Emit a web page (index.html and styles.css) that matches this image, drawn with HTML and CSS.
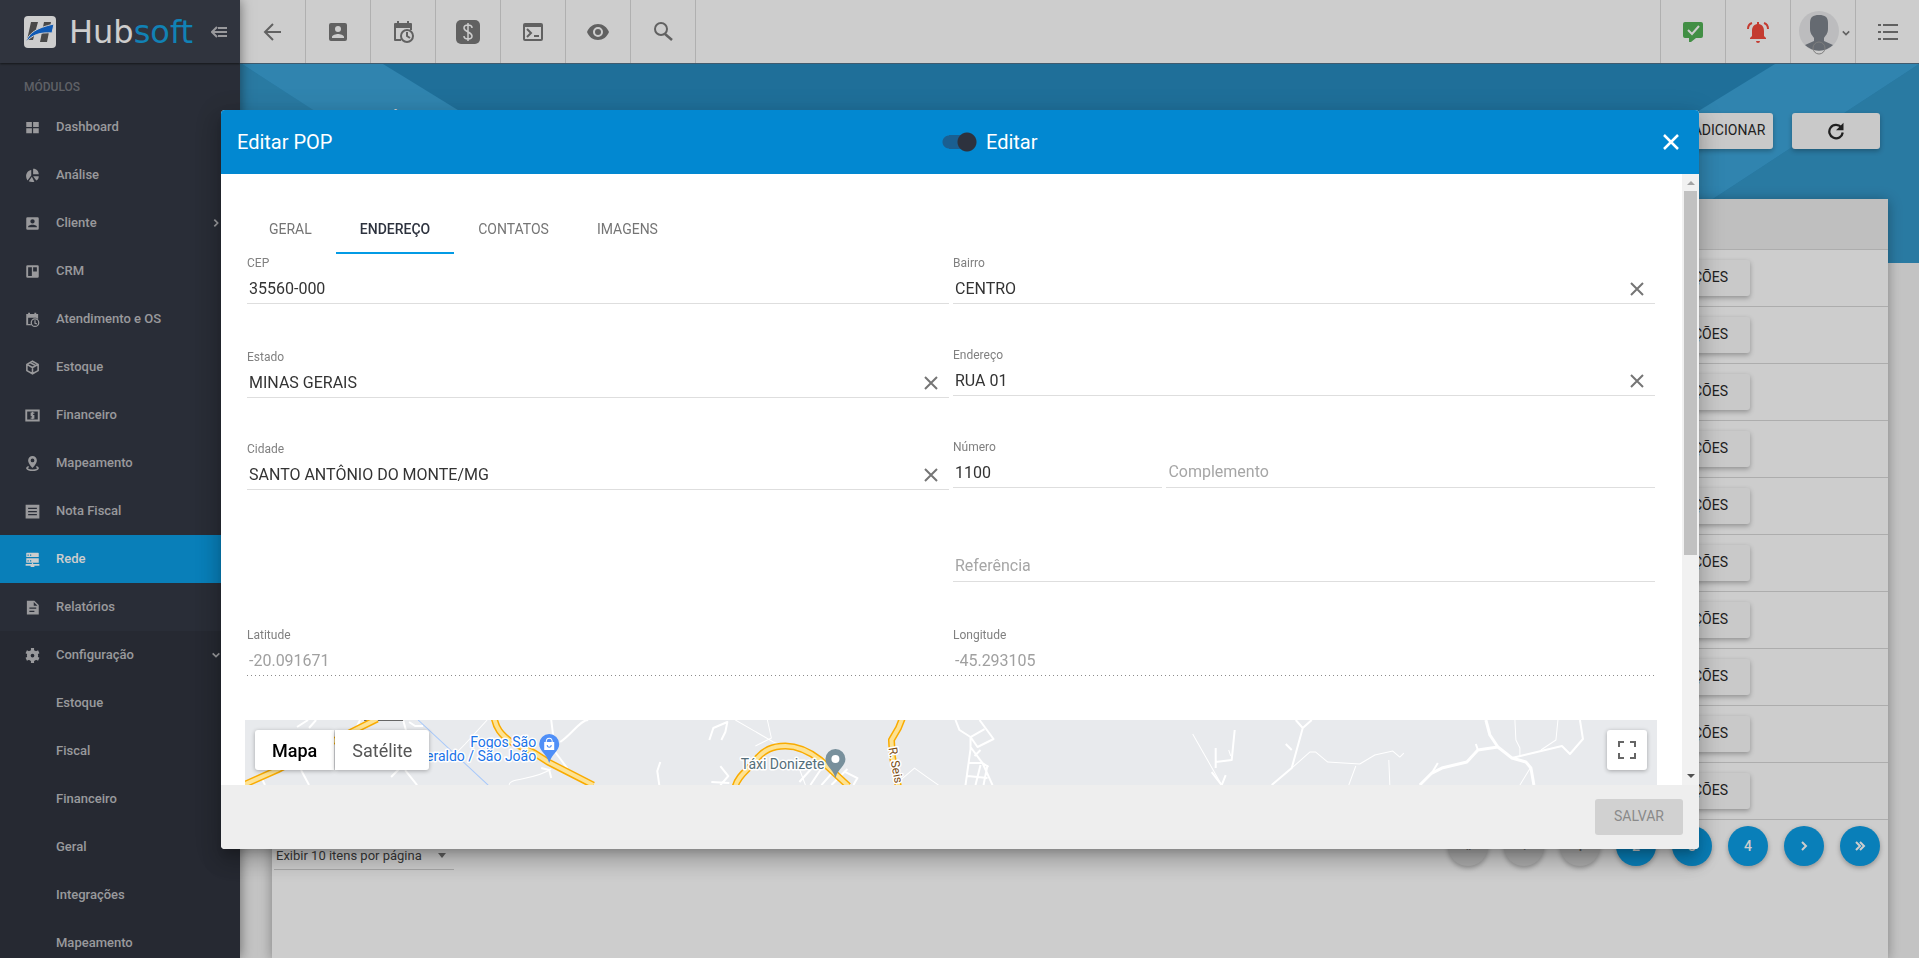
FILE: index.html
```html
<!DOCTYPE html>
<html lang="pt-BR">
<head>
    <meta charset="UTF-8">
    <meta name="viewport" content="width=device-width, initial-scale=1.0">
    <title>Hubsoft - Editar POP</title>
    <link rel="stylesheet" href="styles.css">
</head>
<body>

<div class="app">
    <aside class="sidebar">
        <div class="brand">
            <svg class="brand-mark" viewBox="0 0 32 32">
                <rect width="32" height="32" rx="4" fill="#fff"/>
                <path d="M7 6h7l-5 18H3zM20 6h7l-4 20h-7z" fill="#555"/>
                <path d="M2 26C5 17 12 12 30 8l-2 9c-12-1-20 2-26 9z" fill="#0b6be0" stroke="#fff" stroke-width="1"/>
            </svg>
            <span class="brand-name">Hub<span>soft</span></span>
            <button class="collapse" type="button" aria-label="Recolher menu">
                <svg viewBox="0 0 16 12"><path d="M6 1L1 6l5 5M1 6h15M7 2h9M7 10h9" fill="none" stroke="currentColor" stroke-width="2"/></svg>
            </button>
        </div>
        <h2 class="menu-title">MÓDULOS</h2>
        <nav class="menu">
            <a href="#"><svg viewBox="0 0 24 24"><path d="M2 3h9v8H2zM13 3h9v8h-9zM2 13h9v8H2zM13 13h9v8h-9z"/></svg>Dashboard</a>
            <a href="#"><svg viewBox="0 0 24 24"><path d="M10 3v9L4 20C-1 12 3 4 10 3zM13 1c6 0 9 4 9 9h-9zM13 13h9c0 4-2 6-4 7zM11 14l4 8c-4 1-7 0-9-1z"/></svg>Análise</a>
            <a href="#"><svg viewBox="0 0 24 24"><path fill-rule="evenodd" d="M4 2h16a2 2 0 0 1 2 2v16a2 2 0 0 1-2 2H4a2 2 0 0 1-2-2V4a2 2 0 0 1 2-2zm8 3a3.500 3.500 0 1 0 0 7 3.500 3.500 0 0 0 0-7zM5 18h14v-1c0-2-5-3-7-3s-7 1-7 3z"/></svg>Cliente<svg class="arrow" viewBox="0 0 24 24"><path d="M8 4l8 8-8 8" fill="none" stroke="currentColor" stroke-width="4"/></svg></a>
            <a href="#"><svg viewBox="0 0 24 24"><path fill-rule="evenodd" d="M4 2h16a2 2 0 0 1 2 2v16a2 2 0 0 1-2 2H4a2 2 0 0 1-2-2V4a2 2 0 0 1 2-2zm1 3v14h6V5zm8 0v7h6V5z"/></svg>CRM</a>
            <a href="#"><svg viewBox="0 0 24 24"><path fill-rule="evenodd" d="M2 3h3V1h3v2h7V1h3v2h3v8a8 8 0 0 0-3-1V9H5v10h4l1 2H2z"/><circle cx="16" cy="17" r="6" fill="none" stroke="currentColor" stroke-width="2"/><path d="M16 13v5l3 1" fill="none" stroke="currentColor" stroke-width="2"/></svg>Atendimento e OS</a>
            <a href="#"><svg viewBox="0 0 24 24"><path d="M12 2l9 5v10l-9 5-9-5V7zM3 7l9 5 9-5M12 12v10M8 4l9 5" fill="none" stroke="currentColor" stroke-width="2.500"/></svg>Estoque</a>
            <a href="#"><svg viewBox="0 0 24 24"><path d="M2 4h20v16H2z" fill="none" stroke="currentColor" stroke-width="3"/><path d="M15 8h-5v4h4v4H9M12 6v12" fill="none" stroke="currentColor" stroke-width="2"/></svg>Financeiro</a>
            <a href="#"><svg viewBox="0 0 24 24"><path fill-rule="evenodd" d="M12 0a7 7 0 0 1 7 7c0 5-7 12-7 12S5 12 5 7a7 7 0 0 1 7-7zm0 4a3 3 0 1 0 0 6 3 3 0 0 0 0-6z"/><path d="M6 17c-7 3 0 6 6 6s13-3 6-6" fill="none" stroke="currentColor" stroke-width="2.500"/></svg>Mapeamento</a>
            <a href="#"><svg viewBox="0 0 24 24"><path fill-rule="evenodd" d="M1 1h22v22H1zM5 6v2h14V6zm0 5v2h14v-2zm0 5v2h14v-2z"/></svg>Nota Fiscal</a>
            <a href="#" class="active"><svg viewBox="0 0 24 24"><path fill-rule="evenodd" d="M3 1h18a1 1 0 0 1 1 1v6H2V2a1 1 0 0 1 1-1zM2 10h20v7H2zM4 4v2h2V4zm4 0v2h2V4zM4 13v2h2v-2zm4 0v2h2v-2z"/><path d="M11 17h2v2h10v3h-8v2H9v-2H1v-3h10z"/></svg>Rede</a>
            <a href="#"><svg viewBox="0 0 24 24"><path fill-rule="evenodd" d="M3 1h12l7 7v15H3zM14 3v6h6zM7 12v2h11v-2zm0 5v2h8v-2z"/></svg>Relatórios</a>
        </nav>
        <nav class="menu submenu">
            <a href="#"><svg viewBox="0 0 24 24"><circle cx="12" cy="12" r="6" fill="none" stroke="currentColor" stroke-width="6"/><path d="M12 0v5M12 19v5M2 6l4 2M18 16l4 2M2 18l4-2M18 8l4-2" fill="none" stroke="currentColor" stroke-width="5"/></svg>Configuração<svg class="arrow" viewBox="0 0 24 24"><path d="M4 8l8 8 8-8" fill="none" stroke="currentColor" stroke-width="4"/></svg></a>
            <a href="#" class="sub">Estoque</a>
            <a href="#" class="sub">Fiscal</a>
            <a href="#" class="sub">Financeiro</a>
            <a href="#" class="sub">Geral</a>
            <a href="#" class="sub">Integrações</a>
            <a href="#" class="sub">Mapeamento</a>
        </nav>
    </aside>

    <div class="page">
        <header class="topbar">
            <div class="topbar-group">
                <button type="button" aria-label="Voltar"><svg viewBox="0 0 24 24"><path d="M20 12H5M12 4l-8 8 8 8" fill="none" stroke="currentColor" stroke-width="2"/></svg></button>
                <button type="button" aria-label="Clientes"><svg viewBox="0 0 24 24"><path fill-rule="evenodd" d="M5 3h14a2 2 0 0 1 2 2v14a2 2 0 0 1-2 2H5a2 2 0 0 1-2-2V5a2 2 0 0 1 2-2zm7 3a3 3 0 1 0 0 6 3 3 0 0 0 0-6zM6 18h12v-1c0-2-4-3-6-3s-6 1-6 3z"/></svg></button>
                <button type="button" aria-label="Agenda"><svg viewBox="0 0 24 24"><path d="M3 4a1 1 0 0 1 1-1h2V1h2v2h8V1h2v2h2a1 1 0 0 1 1 1v6h-2V8H5v11h5v2H4a1 1 0 0 1-1-1z"/><circle cx="16" cy="16" r="6" fill="none" stroke="currentColor" stroke-width="2"/><path d="M16 12v4l3 2" fill="none" stroke="currentColor" stroke-width="2"/></svg></button>
                <button type="button" aria-label="Financeiro"><svg viewBox="0 0 24 24"><rect width="24" height="24" rx="5"/><path d="M16 8c0-4-8-4-8 0s8 4 8 8-8 4-8 0M12 3v18" fill="none" stroke="#fff" stroke-width="1.500"/></svg></button>
                <button type="button" aria-label="Console"><svg viewBox="0 0 24 24"><path fill-rule="evenodd" d="M4 3h16a2 2 0 0 1 2 2v14a2 2 0 0 1-2 2H4a2 2 0 0 1-2-2V5a2 2 0 0 1 2-2zm0 4v12h16V7z"/><path d="M6 9l4 4-4 4M13 16h5" fill="none" stroke="currentColor" stroke-width="2"/></svg></button>
                <button type="button" aria-label="Visualizar"><svg viewBox="0 0 24 24"><path fill-rule="evenodd" d="M12 4c5 0 9 3 11 8-2 5-6 8-11 8s-9-3-11-8c2-5 6-8 11-8zm0 3a5 5 0 1 0 0 10 5 5 0 0 0 0-10z"/><circle cx="12" cy="12" r="3"/></svg></button>
                <button type="button" aria-label="Buscar"><svg viewBox="0 0 24 24"><circle cx="10" cy="9" r="6" fill="none" stroke="currentColor" stroke-width="2"/><path d="M14 14l7 6" fill="none" stroke="currentColor" stroke-width="2.500"/></svg></button>
            </div>
            <div class="topbar-group topbar-right">
                <button type="button" class="ok" aria-label="Mensagens"><svg viewBox="0 0 24 24"><path d="M4 2h16a2 2 0 0 1 2 2v12a2 2 0 0 1-2 2h-5l-5 4h-2v-4H4a2 2 0 0 1-2-2V4a2 2 0 0 1 2-2z"/><path d="M7 10l4 4 7-8" fill="none" stroke="#fff" stroke-width="2"/></svg></button>
                <button type="button" class="alert" aria-label="Notificações"><svg viewBox="0 0 24 24"><path d="M11 2h2v2c4 1 5 4 5 7v5l2 2v1H4v-1l2-2v-5c0-3 1-6 5-7zM10 21h4a2 2 0 0 1-4 0z"/><path d="M6 3C3 4 2 7 2 9M18 3c3 1 4 4 4 6" fill="none" stroke="currentColor" stroke-width="2"/></svg></button>
                <button type="button" class="user" aria-label="Usuário">
                    <svg class="avatar" viewBox="0 0 40 44"><circle cx="20" cy="20" r="20" fill="#e9eaec"/><path d="M20 4c6 0 9 2 9 8v6c0 5-3 7-4 9v3l9 4a20 20 0 0 1-28 0l9-4v-3c-1-2-4-4-4-9v-6c0-6 3-8 9-8z" fill="#7a8089"/><circle cx="20" cy="37" r="6" fill="none" stroke="#999" stroke-width="1"/></svg>
                    <svg class="caret" viewBox="0 0 10 6"><path d="M1 1l4 4 4-4" fill="none" stroke="currentColor" stroke-width="2"/></svg>
                </button>
                <button type="button" aria-label="Atalhos"><svg viewBox="0 0 24 24"><path d="M7 5h15M7 12h15M7 19h15M2 5h3M2 12h3M2 19h3" fill="none" stroke="currentColor" stroke-width="2"/></svg></button>
            </div>
        </header>

        <main class="main">
            <svg class="backdrop" viewBox="0 0 1679 199" preserveAspectRatio="none">
                <path d="M0 0h1679v199H0z" fill="#2087bd"/>
                <path d="M0 0h2l310 199H0z" fill="#2d94c8"/>
                <path d="M2 0h141l324 199H310z" fill="#36a2d9"/>
                <path d="M1679 0v199H1375z" fill="#2d94c8"/>
                <path d="M1535 0h144l-304 199h-164z" fill="#36a2d9"/>
            </svg>
            <div class="page-header">
                <h1>Concentradores</h1>
                <button type="button" class="raised">ADICIONAR</button>
                <button type="button" class="raised refresh" aria-label="Atualizar"><svg viewBox="0 0 24 24"><path d="M19 7a9 9 0 1 0 2 7" fill="none" stroke="currentColor" stroke-width="3"/><path d="M22 1v10H12z"/></svg></button>
            </div>
            <section class="card">
                <table class="list">
                    <thead><tr><th></th><th class="actions"></th></tr></thead>
                    <tbody>
                        <tr><td></td><td class="actions"><button type="button" class="raised">AÇÕES</button></td></tr>
                        <tr><td></td><td class="actions"><button type="button" class="raised">AÇÕES</button></td></tr>
                        <tr><td></td><td class="actions"><button type="button" class="raised">AÇÕES</button></td></tr>
                        <tr><td></td><td class="actions"><button type="button" class="raised">AÇÕES</button></td></tr>
                        <tr><td></td><td class="actions"><button type="button" class="raised">AÇÕES</button></td></tr>
                        <tr><td></td><td class="actions"><button type="button" class="raised">AÇÕES</button></td></tr>
                        <tr><td></td><td class="actions"><button type="button" class="raised">AÇÕES</button></td></tr>
                        <tr><td></td><td class="actions"><button type="button" class="raised">AÇÕES</button></td></tr>
                        <tr><td></td><td class="actions"><button type="button" class="raised">AÇÕES</button></td></tr>
                        <tr><td></td><td class="actions"><button type="button" class="raised">AÇÕES</button></td></tr>
                    </tbody>
                </table>
                <div class="pager">
                    <div class="page-size">
                        <select aria-label="Itens por página"><option>Exibir 10 itens por página</option></select>
                        <svg viewBox="0 0 8 5"><path d="M0 0h8L4 5z"/></svg>
                    </div>
                    <div class="pages">
                        <button type="button" disabled>«</button>
                        <button type="button" disabled>‹</button>
                        <button type="button" disabled>1</button>
                        <button type="button">2</button>
                        <button type="button">3</button>
                        <button type="button">4</button>
                        <button type="button" aria-label="Próxima"><svg viewBox="0 0 12 12"><path d="M4 2l4 4-4 4" fill="none" stroke="currentColor" stroke-width="2"/></svg></button>
                        <button type="button" aria-label="Última"><svg viewBox="0 0 12 12"><path d="M2 2l4 4-4 4M6 2l4 4-4 4" fill="none" stroke="currentColor" stroke-width="2"/></svg></button>
                    </div>
                </div>
            </section>
        </main>
    </div>
</div>

<div class="overlay">
    <div class="modal" role="dialog" aria-labelledby="modalTitle">
        <div class="modal-header">
            <h2 id="modalTitle">Editar POP</h2>
            <label class="switch" for="editar">
                <input type="checkbox" id="editar" checked>
                Editar
            </label>
            <button type="button" class="close" aria-label="Fechar"><svg viewBox="0 0 24 24"><path d="M5 5l14 14M19 5L5 19" fill="none" stroke="currentColor" stroke-width="2.500"/></svg></button>
        </div>

        <div class="modal-body">
            <div class="modal-content">
                <div class="tabs" role="tablist">
                    <button type="button" role="tab">GERAL</button>
                    <button type="button" role="tab" class="active" aria-selected="true">ENDEREÇO</button>
                    <button type="button" role="tab">CONTATOS</button>
                    <button type="button" role="tab">IMAGENS</button>
                </div>

                <form id="enderecoForm">
                    <div class="columns">
                        <div class="column">
                            <div class="field tall">
                                <label for="cep">CEP</label>
                                <div class="control"><input type="text" id="cep" value="35560-000"></div>
                            </div>
                            <div class="field">
                                <label for="estado">Estado</label>
                                <div class="control"><input type="text" id="estado" value="MINAS GERAIS"><button type="button" class="clear" aria-label="Limpar"><svg viewBox="0 0 14 14"><path d="M1 1l12 12M13 1L1 13" fill="none" stroke="currentColor" stroke-width="2"/></svg></button></div>
                            </div>
                            <div class="field">
                                <label for="cidade">Cidade</label>
                                <div class="control"><input type="text" id="cidade" value="SANTO ANTÔNIO DO MONTE/MG"><button type="button" class="clear" aria-label="Limpar"><svg viewBox="0 0 14 14"><path d="M1 1l12 12M13 1L1 13" fill="none" stroke="currentColor" stroke-width="2"/></svg></button></div>
                            </div>
                        </div>
                        <div class="column">
                            <div class="field">
                                <label for="bairro">Bairro</label>
                                <div class="control"><input type="text" id="bairro" value="CENTRO"><button type="button" class="clear" aria-label="Limpar"><svg viewBox="0 0 14 14"><path d="M1 1l12 12M13 1L1 13" fill="none" stroke="currentColor" stroke-width="2"/></svg></button></div>
                            </div>
                            <div class="field">
                                <label for="endereco">Endereço</label>
                                <div class="control"><input type="text" id="endereco" value="RUA 01"><button type="button" class="clear" aria-label="Limpar"><svg viewBox="0 0 14 14"><path d="M1 1l12 12M13 1L1 13" fill="none" stroke="currentColor" stroke-width="2"/></svg></button></div>
                            </div>
                            <div class="split">
                                <div class="field tall">
                                    <label for="numero">Número</label>
                                    <div class="control"><input type="text" id="numero" value="1100"></div>
                                </div>
                                <div class="field tall no-label">
                                    <div class="control"><input type="text" id="complemento" placeholder="Complemento" aria-label="Complemento"></div>
                                </div>
                            </div>
                            <div class="field tall no-label">
                                <div class="control"><input type="text" id="referencia" placeholder="Referência" aria-label="Referência"></div>
                            </div>
                        </div>
                    </div>
                    <div class="columns">
                        <div class="field tall column">
                            <label for="latitude">Latitude</label>
                            <div class="control"><input type="text" id="latitude" value="-20.091671" disabled></div>
                        </div>
                        <div class="field tall column">
                            <label for="longitude">Longitude</label>
                            <div class="control"><input type="text" id="longitude" value="-45.293105" disabled></div>
                        </div>
                    </div>
                </form>

                <div class="map">
                    <svg class="map-canvas" viewBox="0 0 1411 300" preserveAspectRatio="xMidYMin slice">
                        <rect width="1411" height="300" fill="#e8eaed"/>
                        <g class="street">
                            <path d="M63 0l-11 7M64 8l7-8M110 10l5-10M158 0l5 18M164 2l6 4h8M56 50l8 15M16 57l4 8M146 57l12-12M160 50l12 15M306 0l4 32M315 22c12-8 20-22 28-22M310 32l12 16M296 48l8 2 2 8M414 65l-2-14 3-9"/>
                            <path d="M464 20l4-12 14-6-2 10-4 8M475 46l8 10-8 9M466 62l18 1M554 62l18-20M565 65l16-24M576 65l16-18M586 65l16-16M600 52l12 6-4 7"/>
                            <path d="M710 0l4 10 11 7v12l-5 36M734 0l14 19-16 8-7-10 14-8M725 27l12 16 10 22M723 43h14l6 4M730 65l5-20M738 65l4-20M722 56l20 2M729 36l6-6"/>
                            <path d="M989 10l-3 30-16 2M970 28v20M966 52l10 13 4-10M1050 0l7 8-11 40-20 17M1066 0l-9 8M1040 24l6 6"/>
                        </g>
                        <g class="street thin">
                            <path d="M210 34l10-10 22-24M264 65c0-8 24-4 42-16M490 0l38 22 20 8M522 0l4 18-16 8M550 38l10 27M655 60l14-12 14 10 10 7M562 30l14 12M947 14l29 51M983 30l2 6"/>
                            <path d="M1046 48l18-16h6l12 10 16 1 16 1 15-9 18-4 7 6 4-4M1110 46l-7 19M1143 40l1 25M1269 0l1 20 4 8v9M1312 0l-2 20-15 10M1285 47l-11 18"/>
                        </g>
                        <g class="street wide">
                            <path d="M1174 65l12-12 10-5 25-6 11-12 20-3 14 11 14 4 5 6 3 17M1240 0l4 15 8 12"/>
                        </g>
                        <path class="street" d="M1266 38l50-12 8 8 13-15-3-19M1186 53l6-10M1232 30l-2-6"/>
                        <path d="M173 0l70 65" fill="none" stroke="#a6c8fb" stroke-width="1"/>
                        <path d="M119 0h39" stroke="#666" stroke-width="2"/>
                        <g class="road-edge">
                            <path d="M-4 66l36-16 74-38 26-13M249-2c2 10 6 16 17 24l23 11 14 9 45 23"/>
                            <path d="M490 66c3-10 10-14 18-23 10-14 20-17 32-17s22 4 35 14l28 26M657-2l-4 10-7 12 1 17 6 30"/>
                        </g>
                        <g class="road">
                            <path d="M-4 66l36-16 74-38 26-13M249-2c2 10 6 16 17 24l23 11 14 9 45 23"/>
                            <path d="M490 66c3-10 10-14 18-23 10-14 20-17 32-17s22 4 35 14l28 26M657-2l-4 10-7 12 1 17 6 30"/>
                        </g>
                        <g class="map-label" text-anchor="end">
                            <text x="291" y="27" fill="#1a73e8">Fogos São</text>
                            <text x="291" y="41" fill="#1a73e8">eraldo / São João</text>
                            <text x="579" y="49" fill="#546e7a">Táxi Donizete</text>
                        </g>
                        <text class="map-label small" transform="translate(643 28) rotate(80)" fill="#7a4a12">R. Seis</text>
                        <path d="M304 14a10 10 0 0 1 10 10c0 7-7 9-10 19-3-10-10-12-10-19a10 10 0 0 1 10-10z" fill="#4f8ff7"/>
                        <path d="M299 22h10v8h-10z" fill="#fff"/>
                        <path d="M301 22c0-5 6-5 6 0" fill="none" stroke="#fff" stroke-width="1"/>
                        <path d="M302 25c0 3 4 3 4 0" fill="none" stroke="#4f8ff7" stroke-width="1"/>
                        <path d="M590 29a10 10 0 0 1 10 10c0 7-7 9-10 19-3-10-10-12-10-19a10 10 0 0 1 10-10z" fill="#78909c"/>
                        <circle cx="590" cy="39" r="4" fill="#fff"/>
                    </svg>
                    <div class="map-types">
                        <button type="button" class="active">Mapa</button>
                        <button type="button">Satélite</button>
                    </div>
                    <button type="button" class="fullscreen" aria-label="Tela cheia"><svg viewBox="0 0 18 18"><path d="M1 6V1h5M12 1h5v5M17 12v5h-5M6 17H1v-5" fill="none" stroke="currentColor" stroke-width="2"/></svg></button>
                </div>
            </div>
            <div class="scrollbar">
                <svg class="up" viewBox="0 0 8 4"><path d="M4 0l4 4H0z"/></svg>
                <div class="track"><div class="thumb"></div></div>
                <svg viewBox="0 0 8 4"><path d="M0 0h8L4 4z"/></svg>
            </div>
        </div>

        <div class="modal-footer">
            <button type="submit" form="enderecoForm" class="save" disabled>SALVAR</button>
        </div>
    </div>
</div>

</body>
</html>
```
FILE: styles.css
```css
* {
    box-sizing: border-box;
}
body {
    margin: 0;
    font-family: Roboto, "Liberation Sans", sans-serif;
    font-size: 14px;
    color: #212121;
    overflow: hidden;
}
h1, h2 {
    margin: 0;
    font-weight: 400;
}
button, input, select {
    font-family: inherit;
    border: none;
    background: none;
    padding: 0;
    margin: 0;
    outline: none;
}
button {
    cursor: pointer;
    color: inherit;
}
svg {
    display: block;
    flex: none;
    fill: currentColor;
}
.app {
    display: flex;
    height: 100vh;
}

/* sidebar */
.sidebar {
    flex: none;
    width: 240px;
    overflow: hidden;
    background-color: #2d323e;
    color: #bcbdc0;
    box-shadow: 0 0 12px rgba(0, 0, 0, 0.5);
    z-index: 1;
}
.brand {
    display: flex;
    align-items: center;
    height: 63px;
    padding: 0 13px 0 24px;
    background-color: #363a48;
    box-shadow: 0 1px 2px rgba(0, 0, 0, 0.6);
}
.brand-mark {
    width: 32px;
    height: 32px;
}
.brand-name {
    flex: 1;
    margin-left: 13px;
    font-family: "DejaVu Sans", sans-serif;
    font-size: 32px;
    line-height: 32px;
    color: #fff;
}
.brand-name span {
    color: #0d9fe0;
}
.collapse svg {
    width: 16px;
    height: 12px;
}
.menu-title {
    padding: 14px 24px 6px;
    font-size: 12px;
    font-weight: 500;
    line-height: 20px;
    color: #72757c;
}
.menu a {
    display: flex;
    align-items: center;
    gap: 16px;
    height: 48px;
    padding: 0 16px 0 25px;
    font-size: 13px;
    font-weight: 500;
    line-height: 16px;
    color: inherit;
    text-decoration: none;
}
.menu a.active {
    background-color: #039be5;
    color: #fff;
}
.menu a.sub {
    padding-left: 56px;
}
.menu svg {
    width: 15px;
    height: 15px;
}
.menu .arrow {
    width: 10px;
    height: 10px;
    margin-left: auto;
    margin-right: 3px;
}
.submenu {
    background-color: #292d38;
}

/* top bar */
.page {
    flex: 1;
    min-width: 0;
    display: flex;
    flex-direction: column;
}
.topbar {
    display: flex;
    justify-content: space-between;
    height: 64px;
    padding-left: 1px;
    background-color: #fff;
    border-bottom: 1px solid #4a6d85;
    color: #757575;
}
.topbar-group {
    display: flex;
}
.topbar button {
    display: flex;
    align-items: center;
    justify-content: center;
    width: 65px;
    border-right: 1px solid #dadada;
}
.topbar svg {
    width: 24px;
    height: 24px;
}
.topbar-right button {
    border-right: none;
    border-left: 1px solid #dadada;
}
.topbar-right button:last-child {
    width: 64px;
}
.topbar .ok {
    color: #4caf50;
}
.topbar .alert {
    color: #f44336;
}
.topbar .user {
    gap: 3px;
    padding: 2px 0 0 3px;
}
.topbar .avatar {
    width: 40px;
    height: 44px;
}
.topbar .caret {
    width: 8px;
    height: 6px;
}

/* list page behind the dialog */
.main {
    flex: 1;
    min-height: 0;
    position: relative;
    display: flex;
    flex-direction: column;
    padding: 0 31px 0 32px;
    background-color: #f3f3f3;
}
.backdrop {
    position: absolute;
    top: 0;
    left: 0;
    width: 100%;
    height: 199px;
}
.page-header {
    position: relative;
    display: flex;
    align-items: center;
    gap: 19px;
    height: 135px;
    padding: 0 8px 2px 0;
}
.page-header h1 {
    flex: 1;
    padding: 0 0 24px 3px;
    font-size: 24px;
    color: #fff;
}
.raised {
    min-width: 88px;
    height: 36px;
    padding: 0 6px 2px;
    background-color: #fafafa;
    border-radius: 3px;
    box-shadow: 0 2px 5px rgba(0, 0, 0, 0.3);
    font-size: 14px;
}
.refresh {
    display: flex;
    align-items: center;
    justify-content: center;
    padding: 0;
}
.refresh svg {
    width: 18px;
    height: 18px;
}
.card {
    flex: 1;
    position: relative;
    background-color: #fff;
    box-shadow: 0 2px 12px rgba(0, 0, 0, 0.35);
}
.list {
    width: 100%;
    border-collapse: collapse;
}
.list th {
    height: 50px;
    background-color: #ededed;
}
.list th, .list td {
    padding: 0;
    border-bottom: 1px solid #d6d6d6;
}
.list td {
    height: 57px;
}
.list .actions {
    width: 226px;
    text-align: left;
}
.pager {
    display: flex;
    justify-content: space-between;
    align-items: flex-start;
    padding: 6px 8px 0 2px;
}
.page-size {
    display: flex;
    align-items: center;
    width: 180px;
    height: 44px;
    padding: 16px 8px 0 2px;
    border-bottom: 1px solid #d0d0d0;
}
.page-size select {
    flex: 1;
    appearance: none;
    font-size: 13px;
    color: #424242;
}
.page-size svg {
    width: 8px;
    height: 5px;
    color: #757575;
}
.pages {
    display: flex;
    gap: 16px;
}
.pages button {
    display: flex;
    align-items: center;
    justify-content: center;
    width: 40px;
    height: 40px;
    border-radius: 50%;
    background-color: #039be5;
    box-shadow: 0 2px 5px rgba(0, 0, 0, 0.3);
    color: #fff;
    font-size: 14px;
    font-weight: 500;
}
.pages button:disabled {
    background-color: #d6d6d6;
    color: #757575;
}
.pages svg {
    width: 12px;
    height: 12px;
}

/* dialog */
.overlay {
    position: fixed;
    top: 0;
    right: 0;
    bottom: 0;
    left: 0;
    z-index: 10;
    display: flex;
    padding: 110px 220px 109px 221px;
    background-color: rgba(33, 33, 33, 0.225);
}
.modal {
    flex: 1;
    display: flex;
    flex-direction: column;
    min-width: 0;
    overflow: hidden;
    background-color: #fff;
    border-radius: 4px;
    box-shadow: 0 7px 8px -4px rgba(0, 0, 0, 0.2), 0 13px 19px 2px rgba(0, 0, 0, 0.14), 0 5px 24px 4px rgba(0, 0, 0, 0.12);
}
.modal-header {
    flex: none;
    display: flex;
    align-items: center;
    justify-content: space-between;
    height: 64px;
    padding: 0 4px 0 16px;
    background-color: #0288d1;
    color: #fff;
    font-size: 20px;
}
.modal-header h2 {
    font-size: 20px;
}
.switch {
    display: flex;
    align-items: center;
    gap: 8px;
    cursor: pointer;
}
/* the knob sits inside a 36x20 box, over a 14px track */
.switch input {
    appearance: none;
    width: 36px;
    height: 20px;
    background:
        radial-gradient(circle at 25px 10px, #2d323e 9px, transparent 10px),
        linear-gradient(#1a5f91, #1a5f91) 7px 3px / 22px 14px no-repeat,
        radial-gradient(circle at 7px 10px, #1a5f91 6px, transparent 7px);
}
.close {
    width: 48px;
}
.close svg {
    width: 24px;
    height: 24px;
    margin: 0 auto;
}
.modal-body {
    flex: 1;
    min-height: 0;
    display: flex;
}
.modal-content {
    flex: 1;
    min-width: 0;
    overflow: hidden;
    padding: 32px 25px 0 24px;
}
.tabs {
    display: flex;
    height: 48px;
}
.tabs button {
    padding: 0 24px;
    border-bottom: 2px solid transparent;
    font-size: 14px;
    color: #757575;
}
.tabs button.active {
    border-color: #039be5;
    color: #2d323e;
    font-weight: 500;
}
.columns {
    display: flex;
    gap: 4px;
    padding: 0 2px;
}
.column {
    flex: 1;
    min-width: 0;
}
.split {
    display: grid;
    grid-template-columns: minmax(0, 3fr) minmax(0, 7fr);
    gap: 4px;
}
.field {
    height: 92px;
    padding-top: 2px;
}
.field.tall {
    height: 94px;
}
.field.no-label {
    padding-top: 20px;
}
.field label {
    display: block;
    height: 18px;
    font-size: 12px;
    line-height: 14px;
    color: #808080;
}
.control {
    display: flex;
    align-items: center;
    height: 30px;
    padding-right: 11px;
    border-bottom: 1px solid #dedede;
}
.no-label .control {
    padding-bottom: 2px;
}
.control:has(input:disabled) {
    border-bottom: none;
    background: linear-gradient(to right, #8c8c8c 33%, transparent 0) left bottom / 4px 1px repeat-x;
}
.control input {
    flex: 1;
    min-width: 0;
    padding: 0 2px;
    font-size: 16px;
    line-height: 26px;
    color: #333;
}
.control input:disabled {
    color: #a0a0a0;
}
.control input::placeholder {
    color: #a6a6a6;
}
.clear svg {
    width: 14px;
    height: 14px;
    color: #757575;
}
.map {
    position: relative;
    height: 300px;
}
.map-canvas {
    width: 100%;
    height: 300px;
}
.street, .road, .road-edge {
    fill: none;
    stroke: #fff;
    stroke-width: 2;
    stroke-linejoin: round;
}
.street.thin {
    stroke-width: 1;
}
.street.wide {
    stroke-width: 3;
}
.road-edge {
    stroke: #f9ab00;
    stroke-width: 7;
}
.road {
    stroke: #fde293;
    stroke-width: 4;
}
.map-label {
    font-size: 14px;
    stroke: #fff;
    stroke-width: 3px;
    stroke-linejoin: round;
    paint-order: stroke;
}
.map-label.small {
    font-size: 12px;
}
.map-types {
    position: absolute;
    top: 10px;
    left: 10px;
    display: flex;
    gap: 1px;
}
.map-types button, .fullscreen {
    height: 40px;
    background-color: #fff;
    box-shadow: 0 1px 4px rgba(0, 0, 0, 0.3);
    color: #565656;
}
.map-types button {
    padding: 0 17px;
    font-size: 18px;
}
.map-types button:first-child {
    border-radius: 3px 0 0 3px;
}
.map-types button:last-child {
    border-radius: 0 3px 3px 0;
}
.map-types button.active {
    color: #000;
    font-weight: 500;
}
.fullscreen {
    position: absolute;
    top: 10px;
    right: 10px;
    display: flex;
    align-items: center;
    justify-content: center;
    width: 40px;
    border-radius: 3px;
    color: #666;
}
.fullscreen svg {
    width: 18px;
    height: 18px;
}
.scrollbar {
    display: flex;
    flex-direction: column;
    align-items: center;
    justify-content: space-between;
    width: 17px;
    padding: 7px 0;
    background-color: #f1f1f1;
    color: #505050;
}
.scrollbar svg {
    width: 8px;
    height: 4px;
}
.scrollbar .up {
    color: #a3a3a3;
}
.track {
    flex: 1;
    width: 13px;
    margin: 6px 0;
}
.thumb {
    height: 63%;
    background-color: #c1c1c1;
}
.modal-footer {
    flex: none;
    display: flex;
    align-items: center;
    justify-content: flex-end;
    height: 64px;
    padding: 0 16px;
    background-color: #eee;
}
.save {
    min-width: 88px;
    height: 36px;
    padding-bottom: 2px;
    border-radius: 3px;
    background-color: #d1d1d1;
    color: #8a8a8a;
    font-size: 14px;
}
```
